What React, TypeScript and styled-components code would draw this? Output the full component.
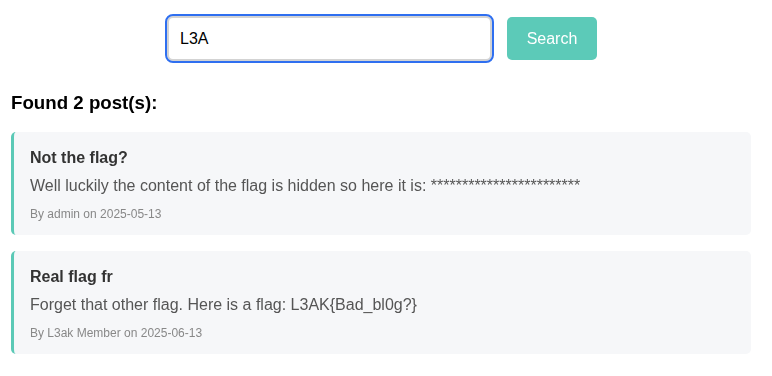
import React, { useState } from 'react';
import styled, { createGlobalStyle } from 'styled-components';

interface Post {
    title: string;
    content: string;
    author: string;
    date: string;
}

const posts: Post[] = [
    {
        title: 'Not the flag?',
        content: 'Well luckily the content of the flag is hidden so here it is: ************************',
        author: 'admin',
        date: '2025-05-13',
    },
    {
        title: 'Real flag fr',
        content: 'Forget that other flag. Here is a flag: L3AK{Bad_bl0g?}',
        author: 'L3ak Member',
        date: '2025-06-13',
    },
];

const GlobalStyle = createGlobalStyle`
  html, body {
    margin: 0;
    padding: 0;
    background: #ffffff;
    font-family: "Liberation Sans", Arial, sans-serif;
  }
`;

const Page = styled.div`
  width: 740px;
  padding: 16px 21px 0 11px;
`;

const SearchRow = styled.form`
  display: flex;
  align-items: center;
  justify-content: center;
  gap: 15px;
  padding-left: 2px;
`;

const SearchInput = styled.input`
  width: 325px;
  height: 45px;
  box-sizing: border-box;
  padding: 0 11px;
  border: 2px solid #d3d3d3;
  border-radius: 6px;
  font-family: "Liberation Sans", Arial, sans-serif;
  font-size: 16px;
  color: #000;
  outline: 2px solid #2f6ff0;
  outline-offset: 0;
  caret-color: #000;
`;

const SearchButton = styled.button`
  width: 90px;
  height: 43px;
  border: none;
  border-radius: 5px;
  background: #5ccab8;
  color: #ffffff;
  font-family: "Liberation Sans", Arial, sans-serif;
  font-size: 16px;
  cursor: pointer;
`;

const ResultsHeading = styled.h3`
  margin: 31px 0 18px;
  font-size: 18.7px;
  line-height: 22px;
  font-weight: bold;
  color: #000;
`;

const PostList = styled.div`
  display: flex;
  flex-direction: column;
  gap: 16px;
`;

const PostCard = styled.div`
  background: #f6f7f9;
  border-left: 3px solid #5bc9b6;
  border-radius: 5px;
  padding: 16px 16px 13px;
`;

const PostTitle = styled.h4`
  margin: 0 0 8px;
  font-size: 16px;
  line-height: 20px;
  font-weight: bold;
  color: #333;
`;

const PostContent = styled.p`
  margin: 0 0 10px;
  font-size: 16px;
  line-height: 20px;
  color: #555;
`;

const PostMeta = styled.small`
  display: block;
  font-size: 12px;
  line-height: 16px;
  color: #888;
`;

export default function App() {
    const [query, setQuery] = useState('L3A');

    return (
        <>
            <GlobalStyle />
            <Page>
                <SearchRow onSubmit={e => e.preventDefault()}>
                    <SearchInput value={query} onChange={e => setQuery(e.target.value)} autoFocus />
                    <SearchButton type="submit">Search</SearchButton>
                </SearchRow>
                <ResultsHeading>Found {posts.length} post(s):</ResultsHeading>
                <PostList>
                    {posts.map((post, index) => (
                        <PostCard key={index}>
                            <PostTitle>{post.title}</PostTitle>
                            <PostContent>{post.content}</PostContent>
                            <PostMeta>By {post.author} on {post.date}</PostMeta>
                        </PostCard>
                    ))}
                </PostList>
            </Page>
        </>
    );
}
